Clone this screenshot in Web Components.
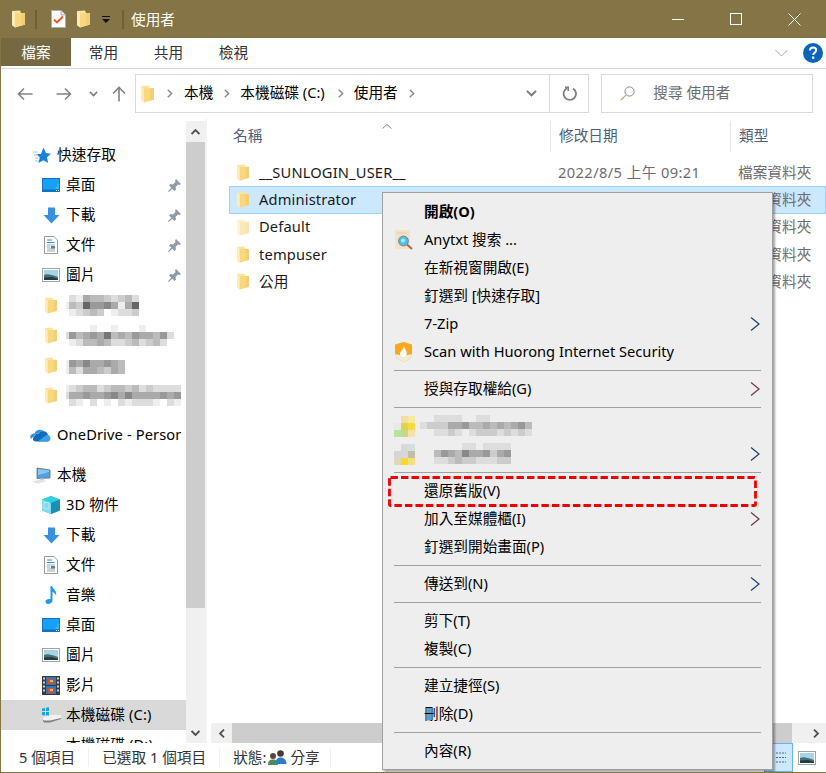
<!DOCTYPE html>
<html lang="zh-Hant"><head><meta charset="utf-8"><title>使用者</title>
<style>
html,body{margin:0;padding:0;background:#fff}
body{font-family:"Noto Sans","Noto Sans CJK TC",sans-serif;font-size:14.67px;color:#000}
</style></head><body>
<template id="t-window"><style>
:host{display:flex;flex-direction:column;position:relative;width:826px;height:773px;box-sizing:border-box;border-left:1px solid #857445;border-bottom:1px solid #857445;overflow:hidden;background:#fff}
.main{flex:1;display:flex;min-height:0}
</style>
<slot name="top"></slot><div class="main"><slot name="main"></slot></div><slot name="status"></slot><slot name="over"></slot></template>

<template id="t-title"><style>
:host{display:flex;align-items:center;height:38px;flex:none;background:#857445;color:#fff;margin-left:-1px;padding-left:12px}
.s{height:17px;background:#a39a75;border:1px solid #6e6039;margin:0 0 0 10px;box-sizing:content-box;width:0}
.t{font-size:14.67px;margin-left:7px;color:#fff;line-height:20px;margin-top:-1px}
.btns{margin-left:auto;display:flex;align-items:center;padding-right:2px}
.b{width:58.5px;height:38px;display:flex;align-items:center;justify-content:center}
</style>
<x-icon name="folder" w="13" h="18"></x-icon><span class="s"></span>
<x-icon name="check" w="15" h="18" style="margin-left:14px"></x-icon>
<x-icon name="folder" w="13" h="18" style="margin-left:11px"></x-icon>
<x-icon name="qat" w="8" h="8" style="margin-left:12px;margin-top:2px"></x-icon><span class="s" style="margin-left:12px"></span>
<span class="t">使用者</span>
<div class="btns"><div class="b"><x-icon name="min" w="12" h="12"></x-icon></div><div class="b"><x-icon name="max" w="12" h="12"></x-icon></div><div class="b"><x-icon name="close" w="13" h="13"></x-icon></div></div>
</template>

<template id="t-tabs"><style>
:host{display:flex;align-items:center;height:31px;flex:none;box-sizing:border-box;border-bottom:1px solid #dadada;background:#fff;color:#333}
.tab{height:30px;display:flex;align-items:center;justify-content:center;line-height:20px;padding-bottom:2px;box-sizing:border-box;width:65px}
.on{background:#766840;color:#fff;width:70px;height:28px;margin-top:-2px;padding-bottom:0}
.r{margin-left:auto;display:flex;align-items:center;gap:15px;padding-right:3px}
</style>
<div class="tab on">檔案</div><div class="tab">常用</div><div class="tab">共用</div><div class="tab">檢視</div>
<div class="r"><x-icon name="chev-d-thin" w="13" h="8"></x-icon><x-icon name="help" w="20" h="20"></x-icon></div>
</template>

<template id="t-nav"><style>
:host{display:flex;align-items:center;height:50px;flex:none;box-sizing:border-box;padding:5px 13px 6px 0;background:#fff;color:#000}
.ico{display:flex;align-items:center;padding-left:16px}
.addr{margin-left:9px;width:455px;height:39px;box-sizing:border-box;border:1px solid #d9d9d9;display:flex;align-items:center;padding-left:5px}
.addr span{line-height:20px;white-space:nowrap;margin-top:-3px}
.addr x-icon{flex:none}
.ch{margin:0 10px 0 11px}
.end{margin-left:auto;display:flex;align-items:center;height:100%}
.rf{width:38px;height:100%;border-left:1px solid #d9d9d9;display:flex;align-items:center;justify-content:center}
.search{margin-left:12px;width:212px;height:39px;box-sizing:border-box;border:1px solid #d9d9d9;display:flex;align-items:center;padding-left:18px;color:#6d6d6d}
.search span{margin-left:18px;line-height:20px;margin-top:-3px}
</style>
<div class="ico"><x-icon name="back" w="16" h="14"></x-icon><x-icon name="fwd" w="16" h="14" style="margin-left:23px"></x-icon><x-icon name="chev-d" w="9" h="6" style="margin-left:17px"></x-icon><x-icon name="up" w="14" h="16" style="margin-left:14px"></x-icon></div>
<div class="addr"><x-icon name="folder" w="13" h="18"></x-icon><x-icon class="ch" name="chev-r" w="6" h="9" style="margin-left:13px;margin-right:11px"></x-icon><span>本機</span><x-icon class="ch" name="chev-r" w="6" h="9"></x-icon><span>本機磁碟 (C:)</span><x-icon class="ch" name="chev-r" w="6" h="9" style="margin-left:13px"></x-icon><span>使用者</span><x-icon class="ch" name="chev-r" w="6" h="9"></x-icon>
<div class="end"><x-icon name="chev-d" w="11" h="7" style="margin-right:12px"></x-icon><div class="rf"><x-icon name="refresh" w="15" h="15"></x-icon></div></div></div>
<div class="search"><x-icon name="search" w="15" h="15"></x-icon><span>搜尋 使用者</span></div>
</template>

<template id="t-side"><style>
:host{display:block;width:185px;flex:none;overflow:hidden;padding-top:21px;box-sizing:border-box}
</style><slot></slot></template>

<template id="t-row"><style>
:host{display:flex;align-items:center;height:30px;box-sizing:border-box;white-space:nowrap;overflow:hidden;color:#000}
:host([level="0"]){padding-left:32px}
:host([level="1"]){padding-left:41px}
:host([selected]){background:#d9d9d9}
.ic{flex:none;width:18px;display:flex;justify-content:center;margin-right:6px}
.tx{line-height:20px;margin-top:-2px;flex:1;overflow:hidden;letter-spacing:.12px}
.pin{flex:none;margin-right:5px;display:flex}
</style><span class="ic"><slot name="i"></slot></span><span class="tx"><slot></slot></span><span class="pin"><slot name="p"></slot></span></template>

<template id="t-vscroll"><style>
:host{display:flex;flex-direction:column;width:19px;flex:none;background:#f0f0f0;margin-top:2px}
.a{height:21px;display:flex;align-items:center;justify-content:center;flex:none}
.th{height:466px;background:#cdcdcd;flex:none}
.f{flex:1}
</style><div class="a"><x-icon name="chev-u-b" w="9" h="6"></x-icon></div><div class="th"></div><div class="f"></div><div class="a"><x-icon name="chev-d-b" w="9" h="6"></x-icon></div></template>

<template id="t-files"><style>
:host{display:flex;flex-direction:column;flex:1;min-width:0;border-left:2px solid #f3f3f3;position:relative}
.hd{display:flex;height:31px;margin-top:2px;color:#4c607a;flex:none;position:relative}
.c{box-sizing:border-box;line-height:20px;padding-left:8px;padding-top:4px;border-right:1px solid #e5e5e5;height:31px}
.c1{width:344px;padding-left:26px}.c2{width:180px}.c3{flex:1;border:0}
.up{position:absolute;left:175px;top:3px}
.list{flex:1;padding-top:7px;min-height:0;overflow:hidden}
.sb{height:20px;flex:none;display:flex;align-items:center;background:#f0f0f0;margin-left:4px}
.sb .l{width:21px;display:flex;justify-content:center}.sb .t{width:560px;height:100%;background:#cdcdcd}.sb .r{margin-left:auto;width:21px;display:flex;justify-content:center}
</style><div class="hd"><div class="c c1">名稱</div><div class="c c2">修改日期</div><div class="c c3">類型</div><x-icon class="up" name="chev-u-thin" w="10" h="5"></x-icon></div>
<div class="list"><slot></slot></div>
<div class="sb"><div class="l"><x-icon name="chev-l-b" w="6" h="9"></x-icon></div><div class="t"></div><div class="r"><x-icon name="chev-r-b" w="6" h="9"></x-icon></div></div></template>

<template id="t-file"><style>
:host{display:flex;align-items:center;height:27.3px;margin-left:22px;box-sizing:border-box;white-space:nowrap;color:#1a1a1a;border:1px solid transparent}
:host([selected]){background:#cce8ff;border-color:#99d1ff}
x-icon{margin-left:7px;margin-right:10px}
.n{width:299px;line-height:20px;margin-top:-2px;overflow:visible;letter-spacing:.16px}
.d{width:180px;color:#6d6d6d;line-height:20px;margin-top:-2px;letter-spacing:.4px}
.k{color:#6d6d6d;line-height:20px;margin-top:-2px}
</style><x-icon id="i" name="folder" w="12" h="17"></x-icon><span class="n"><slot></slot></span><span class="d"><slot name="date"></slot></span><span class="k">檔案資料夾</span></template>

<template id="t-status"><style>
:host{display:flex;align-items:center;height:29px;flex:none;background:#fff;color:#333;position:relative;padding-left:18px;box-sizing:border-box}
span{line-height:20px;margin-top:-2px;white-space:nowrap}
i{width:1px;height:19px;background:#f0f0f0;margin:0 13px}
.v{margin-left:auto;display:flex;align-items:center;height:100%}
.sel{width:29px;height:29px;box-sizing:border-box;background:#cce8ff;border:1px solid #66b5e0;display:flex;align-items:center;justify-content:center}
.ot{margin:0 10px 0 5px;display:flex}
</style><span>5 個項目</span><i></i><span>已選取 1 個項目</span><i></i><span>狀態:</span><x-icon name="share" w="20" h="18" style="margin:0 3px 0 1px"></x-icon><span>分享</span><i style="margin-left:10px"></i>
<div class="v"><div class="sel"><x-icon name="details" w="15" h="13"></x-icon></div><div class="ot"><x-icon name="picture" w="18" h="14"></x-icon></div></div></template>

<template id="t-menu"><style>
:host{display:block;position:absolute;left:381px;top:192px;width:391px;height:578px;box-sizing:border-box;background:#eeeeee;border:1px solid #a0a0a0;padding-top:5px;box-shadow:2px 2px 2px rgba(0,0,0,.35);color:#000}
.hl{position:absolute;left:5px;top:283px}
</style><slot></slot><svg class="hl" width="369" height="31" viewBox="0 0 369 31"><rect x="1.5" y="1.5" width="366" height="28" rx="1" fill="none" stroke="#ee0000" stroke-width="2.8" stroke-dasharray="7.4 3.1"/></svg></template>

<template id="t-mi"><style>
:host{display:flex;align-items:center;height:28px;padding-left:41px;position:relative;white-space:nowrap}
:host([bold]){font-weight:700}
.tx{line-height:20px;margin-top:-2px}
.ic{position:absolute;left:11px;top:4px;display:flex}
.ar{position:absolute;left:367px;top:7px;display:flex}
</style><span class="ic"><slot name="i"></slot></span><span class="tx"><slot></slot></span><span class="ar" id="a"></span></template>

<template id="t-sep"><style>:host{display:block;height:1px;background:#a0a0a0;margin:4px 11px 4px 11px}</style></template>

<x-window>
 <x-title slot="top"></x-title><x-tabs slot="top"></x-tabs><x-nav slot="top"></x-nav>
 <x-side slot="main">
  <x-row level="0"><x-icon slot="i" name="star" w="18" h="17"></x-icon>快速存取</x-row>
  <x-row level="1"><x-icon slot="i" name="desktop" w="18" h="14"></x-icon>桌面<x-icon slot="p" name="pin" w="13" h="13"></x-icon></x-row>
  <x-row level="1"><x-icon slot="i" name="down" w="17" h="17"></x-icon>下載<x-icon slot="p" name="pin" w="13" h="13"></x-icon></x-row>
  <x-row level="1"><x-icon slot="i" name="doc" w="14" h="18"></x-icon>文件<x-icon slot="p" name="pin" w="13" h="13"></x-icon></x-row>
  <x-row level="1"><x-icon slot="i" name="picture" w="18" h="14"></x-icon>圖片<x-icon slot="p" name="pin" w="13" h="13"></x-icon></x-row>
  <x-row level="1"><x-icon slot="i" name="folder" w="12" h="17"></x-icon><x-blur data="fdeabbcdcbdf ebc6998aea6f fedcbcfeddcf" style="margin:1px 0 0 -4px"></x-blur></x-row>
  <x-row level="1"><x-icon slot="i" name="folder" w="12" h="17"></x-icon><x-blur data="ffffeffefffeffff d9ba9a7bab9aab9d fedbbabddcbdcbdf" style="margin:1px 0 0 -4px"></x-blur></x-row>
  <x-row level="1"><x-icon slot="i" name="folder" w="12" h="17"></x-icon><x-blur data="e9a8aa9ab ebdaabcab" style="margin:1px 0 0 -4px"></x-blur></x-row>
  <x-row level="1"><x-icon slot="i" name="folder" w="12" h="17"></x-icon><x-blur data="edcbbdcbbcbdcdddde daa9aa98a8aaaa9a99 fdefdfefdedddefdee" style="margin:1px 0 0 -4px"></x-blur></x-row>
  <div style="height:10px"></div>
  <x-row level="0"><x-icon slot="i" name="onedrive" w="21" h="14" style="margin-left:-3px"></x-icon>OneDrive - Personal</x-row>
  <div style="height:10px"></div>
  <x-row level="0"><x-icon slot="i" name="pc" w="20" h="17" style="margin-left:-2px"></x-icon>本機</x-row>
  <x-row level="1"><x-icon slot="i" name="cube" w="18" h="18"></x-icon>3D 物件</x-row>
  <x-row level="1"><x-icon slot="i" name="down" w="17" h="17"></x-icon>下載</x-row>
  <x-row level="1"><x-icon slot="i" name="doc" w="14" h="18"></x-icon>文件</x-row>
  <x-row level="1"><x-icon slot="i" name="music" w="13" h="18"></x-icon>音樂</x-row>
  <x-row level="1"><x-icon slot="i" name="desktop" w="18" h="14"></x-icon>桌面</x-row>
  <x-row level="1"><x-icon slot="i" name="picture" w="18" h="14"></x-icon>圖片</x-row>
  <x-row level="1"><x-icon slot="i" name="film" w="18" h="19"></x-icon>影片</x-row>
  <x-row level="1" selected><x-icon slot="i" name="drive" w="20" h="16"></x-icon>本機磁碟 (C:)</x-row>
  <x-row level="1"><x-icon slot="i" name="drive2" w="20" h="16"></x-icon>本機磁碟 (D:)</x-row>
 </x-side>
 <x-vscroll slot="main"></x-vscroll>
 <x-files slot="main">
  <x-file>__SUNLOGIN_USER__<span slot="date">2022/8/5 上午 09:21</span></x-file>
  <x-file selected>Administrator</x-file>
  <x-file faded>Default</x-file>
  <x-file>tempuser</x-file>
  <x-file>公用</x-file>
 </x-files>
 <x-status slot="status"></x-status>
 <x-menu slot="over">
  <x-mi bold>開啟(O)</x-mi>
  <x-mi><x-icon slot="i" name="anytxt" w="20" h="20"></x-icon>Anytxt 搜索 ...</x-mi>
  <x-mi>在新視窗開啟(E)</x-mi>
  <x-mi>釘選到 [快速存取]</x-mi>
  <x-mi arrow="#17406a">7-Zip</x-mi>
  <x-mi><x-icon slot="i" name="shield" w="19" h="20"></x-icon>Scan with Huorong Internet Security</x-mi>
  <x-sep></x-sep>
  <x-mi arrow="#70304a">授與存取權給(G)</x-mi>
  <x-sep></x-sep>
  <x-mi><x-blur slot="i" colors="eeeeee,f5dca0,f3eb9f;e8e8e8,d6d84e,f9d840;b5e59b,cdd588,f8dfab"></x-blur><x-blur data="eeddddeeddeeeeeee dcccaa9bbababa9be eeddcdedcccdcdcde" style="margin:-1px 0 0 -4px"></x-blur></x-mi>
  <x-mi arrow="#17406a"><x-blur slot="i" colors="eeeeee,d8d8d8,d6dde0;d5d5d5,d8d8d8,c2bfa8;ddd8b8,f8d72e,f3e07f"></x-blur><x-blur data="eeeeeeddedddd eeb9ab8aa9ca9 eeddcbccdddcc" style="margin:-1px 0 0 -4px"></x-blur></x-mi>
  <x-sep></x-sep>
  <x-mi>還原舊版(V)</x-mi>
  <x-mi arrow="#70304a">加入至媒體櫃(I)</x-mi>
  <x-mi>釘選到開始畫面(P)</x-mi>
  <x-sep></x-sep>
  <x-mi arrow="#17406a">傳送到(N)</x-mi>
  <x-sep></x-sep>
  <x-mi>剪下(T)</x-mi>
  <x-mi>複製(C)</x-mi>
  <x-sep></x-sep>
  <x-mi>建立捷徑(S)</x-mi>
  <x-mi>刪除(D)</x-mi>
  <x-sep></x-sep>
  <x-mi>內容(R)</x-mi>
 </x-menu>
</x-window>

<script>
const ICONS={
folder:['0 0 13 18','<path d="M0 1 8 0.6 9 3H13V14.5L3 17.6 0 15Z" fill="#fbe3a1"/><path d="M3 3.2H13V14.6L3 17.4Z" fill="#f8d77e"/><path d="M0 1.2 2.8 3.2V17.2L0 15Z" fill="#fdeeb9"/><path d="M9.3 3.2H13V14.6L9.3 15.6Z" fill="#f2cf76"/>'],
check:['0 0 15 18','<path d="M.5.5H10L14.5 5V17.5H.5Z" fill="#fff" stroke="#a7aeb4"/><path d="M10 .5V5H14.5" fill="#e8edf0" stroke="#a7aeb4"/><path d="M3 9.5 6 12.5 12 6.5" fill="none" stroke="#e8562a" stroke-width="1.8"/>'],
qat:['0 0 8 8','<path d="M0 .5H8" stroke="#111"/><path d="M0 3H8L4 7Z" fill="#111"/>'],
min:['0 0 12 12','<path d="M0 6.5H12" stroke="#fff"/>'],
max:['0 0 12 12','<rect x=".5" y=".5" width="11" height="11" fill="none" stroke="#fff"/>'],
close:['0 0 13 13','<path d="M.5.5 12.5 12.5M12.5.5.5 12.5" stroke="#fff" fill="none"/>'],
'chev-d-thin':['0 0 13 8','<path d="M.5 1 6.5 7 12.5 1" fill="none" stroke="#a0a0a0"/>'],
help:['0 0 20 20','<circle cx="10" cy="10" r="10" fill="#0a64b8"/><path d="M7 7.5C7 5.7 8.3 4.6 10.1 4.6 12 4.6 13.2 5.7 13.2 7.3 13.2 9.6 10.2 9.6 10.2 12" fill="none" stroke="#fff" stroke-width="2"/><rect x="9" y="13.5" width="2.3" height="2.3" fill="#fff"/>'],
back:['0 0 16 14','<path d="M15.5 7H1.5M7 1.5 1.5 7 7 12.5" fill="none" stroke="#838383" stroke-width="1.6"/>'],
fwd:['0 0 16 14','<path d="M.5 7H14.5M9 1.5 14.5 7 9 12.5" fill="none" stroke="#838383" stroke-width="1.6"/>'],
'chev-d':['0 0 9 6','<path d="M.8.8 4.5 4.6 8.2.8" fill="none" stroke="#787878" stroke-width="1.6"/>'],
up:['0 0 14 16','<path d="M7 15.5V1.5M1 7.5 7 1.5 13 7.5" fill="none" stroke="#838383" stroke-width="1.6"/>'],
'chev-r':['0 0 6 9','<path d="M.8.8 4.6 4.5.8 8.2" fill="none" stroke="#8a8a8a" stroke-width="1.5"/>'],
refresh:['0 0 15 15','<path d="M5 2.2A6.2 6.2 0 1 0 11 2.4" fill="none" stroke="#7f7f7f" stroke-width="1.8"/><path d="M4 0H8V4.5H6.5V2H4Z" fill="#7f7f7f" transform="translate(-1 .5)"/>'],
search:['0 0 15 15','<circle cx="9.5" cy="5.5" r="4.6" fill="none" stroke="#8a8a8a"/><path d="M6.2 8.8 .8 14.2" stroke="#d29a6e" stroke-width="1.2"/>'],
star:['0 0 18 17','<path d="M10.5 .5 13 6 18 6.7 14 10.3 15.2 16 10.5 13.2 5.5 16 6.8 10.3 3 7H8Z" fill="#1c83dd"/><path d="M0 5H5M1 8H5M2 11H5M2 14H6" stroke="#9ccaf0" stroke-width="1"/>'],
desktop:['0 0 18 14','<rect x=".5" y=".5" width="17" height="13" fill="#16a0f6" stroke="#1672c0"/><rect x="1" y="11.5" width="16" height="2" fill="#1272bd"/><path d="M13 11 17 4V11Z" fill="#3ab2fa"/><path d="M14 12.5h1M16 12.5h1" stroke="#e6f4ff"/>'],
down:['0 0 17 17','<path d="M5 .5H12V8H16.5L8.5 16.5 .5 8H5Z" fill="#3a90de"/>'],
doc:['0 0 14 18','<path d="M.5.5H10L13.5 4V17.5H.5Z" fill="#fff" stroke="#9a9a9a"/><path d="M3 4H8M3 6.5H10.5" stroke="#2f8fdb"/><path d="M3 9H11M3 11H6M3 13H11M3 15H11" stroke="#9aa7b0"/><rect x="7" y="10" width="4" height="2.5" fill="#5a7fa0"/>'],
picture:['0 0 18 14','<rect x=".5" y=".5" width="17" height="13" fill="#fff" stroke="#a3a3a3"/><rect x="2" y="2" width="14" height="10" fill="#a5d4ef"/><path d="M2 7C5 5.500 8 6 16 9V12H2Z" fill="#4c6f6a"/><path d="M2 9.500 10 9 16 11V12H2Z" fill="#1f3b45"/>'],
pin:['0 0 13 13','<path d="M8 0 13 5 11.500 6 10 5.500 7.500 8 8 10.500 6.500 12 4.300 9.800.8 13 0 12.300 3.300 8.800 1 6.500 2.500 5 5 5.500 7.500 3 7 1.500Z" fill="#8f9ba8"/>'],
onedrive:['0 0 21 14','<path d="M5 13.500H17.500A3.200 3.200 0 0 0 18 7.300 5 5 0 0 0 8.800 5.500 4 4 0 0 0 4 9 2.500 2.500 0 0 0 5 13.500Z" fill="#0f6cbd"/><path d="M4.500 5.500A5.800 5.800 0 0 1 14.500 4 5 5 0 0 0 8.800 5.500 4.300 4.300 0 0 0 4 9 4 4 0 0 0 1 11 3.500 3.500 0 0 1 4.500 5.500Z" fill="#2f91e3"/><path d="M8 13.500H18A3 3 0 0 0 20 9 3 3 0 0 0 15 8Z" fill="#3aa0ea"/>'],
pc:['0 0 20 17','<path d="M6 1 19 3V11L6 11.500Z" fill="#4ea3e6" stroke="#545e6a" stroke-width=".7"/><path d="M7 2 18 3.500V5L7 8Z" fill="#8cc6f2"/><path d="M1 14.500 10 12.500 16 14 7 16.500Z" fill="#e3e3e3"/><path d="M9 11.500H13V13H9Z" fill="#cfcfcf"/>'],
cube:['0 0 18 18','<path d="M9 0 18 3.500V14.500L9 18 0 14.500V3.500Z" fill="#3cb4d4"/><path d="M0 3.500 9 7V18L0 14.500Z" fill="#86dbed"/><path d="M9 0 18 3.500 9 7 0 3.500Z" fill="#2fd0e2"/><path d="M9 7 18 3.500V14.500L9 18Z" fill="#1d8fb6"/><path d="M2 6.500h5v6H2Z" fill="none" stroke="#bdeef5" stroke-width=".8"/>'],
music:['0 0 13 18','<path d="M5.500 0H7C7.500 3 12.500 4.500 11 10 10.800 7.500 9 6.500 7.500 6V14.500C7.500 16.800 5 18 3 18 1 18 .5 16.500 .5 15.500.5 13.800 2.500 12.500 5.500 13Z" fill="#2199ea"/>'],
film:['0 0 18 19','<rect width="18" height="19" fill="#3a3a3a"/><path d="M1 1.500h2v2H1Zm0 4h2v2H1Zm0 4h2v2H1Zm0 4h2v2H1ZM15 1.500h2v2h-2Zm0 4h2v2h-2Zm0 4h2v2h-2Zm0 4h2v2h-2Z" fill="#cfcfcf"/><rect x="4" y="1" width="10" height="8" fill="#3a74b8"/><rect x="4" y="10" width="10" height="8" fill="#3a74b8"/><path d="M6 3h6v5H6ZM6 12h6v5H6Z" fill="#c9543a"/><path d="M8 4h3v2H8ZM8 13h3v2H8Z" fill="#e8b84a"/>'],
drive:['0 0 20 16','<path d="M2 10.500 9 8H20V11.500L9 15H3L2 13.500Z" fill="#f1f1f1"/><path d="M2 12.500 3 13.500H9L20 11V12L9 15.500H3L2 14Z" fill="#7c8286"/><path d="M1 1.500 4 1V4H1ZM5 .8 8 .3V4H5ZM1 5H4V8.200H1ZM5 5H8V8.500L5 8.200Z" fill="#14a4ea"/>'],
drive2:['0 0 20 16','<path d="M2 10.500 9 8H20V11.500L9 15H3L2 13.500Z" fill="#e2e2e2"/>'],
'chev-u-b':['0 0 9 6','<path d="M.6 5 4.500 1 8.400 5" fill="none" stroke="#505050" stroke-width="1.800"/>'],
'chev-d-b':['0 0 9 6','<path d="M.6 1 4.500 5 8.400 1" fill="none" stroke="#505050" stroke-width="1.800"/>'],
'chev-u-thin':['0 0 10 5','<path d="M.5 4.500 5 .5 9.500 4.500" fill="none" stroke="#8a8a8a"/>'],
'chev-l-b':['0 0 6 9','<path d="M5 .6 1 4.500 5 8.400" fill="none" stroke="#505050" stroke-width="1.800"/>'],
'chev-r-b':['0 0 6 9','<path d="M1 .6 5 4.500 1 8.400" fill="none" stroke="#505050" stroke-width="1.800"/>'],
share:['0 0 20 18','<circle cx="6" cy="7" r="3" fill="#5a4a3a"/><path d="M1 16C1 11.500 3 10.500 6 10.500S11 11.500 11 16Z" fill="#4f8a5a"/><circle cx="13.500" cy="4.500" r="3.300" fill="#4a3a30"/><path d="M8.500 15C8.500 10 11 8.500 13.500 8.500S19.500 10 19.500 15Z" fill="#2b7fc4"/>'],
details:['0 0 15 13','<path d="M0 2H3M5 2H15M0 6.500H3M5 6.500H15M0 11H3M5 11H15" stroke="#5a6a75" stroke-width="1" stroke-dasharray="2 1"/>'],
anytxt:['0 0 20 20','<rect x="1" y="0" width="15" height="19" rx="1" fill="#f3e2c8"/><path d="M3 3h10" stroke="#e2cfb0"/><circle cx="9.500" cy="11" r="4.800" fill="#49c3e8" stroke="#7a8fa0" stroke-width="1.300"/><circle cx="9" cy="10.500" r="2" fill="#a7ecfa"/><path d="M13 14.500 18 19" stroke="#b9653a" stroke-width="2"/>'],
shield:['0 0 19 20','<path d="M9.500 0 18 2.500V11C18 15.500 14 18.500 9.500 20 5 18.500 1 15.500 1 11V2.500Z" fill="#f8a81f"/><path d="M9.500 14 18 12C17.500 15.500 14 18.500 9.500 20 5 18.500 1.500 15.500 1 12Z" fill="#f3ead8"/><path d="M10 4C10.500 8 14 9 12.500 13 11.800 15.500 8 16 6.500 13.500 5 11 7.500 9.500 8 7.500 9 8.500 9.500 6 10 4Z" fill="#fff"/>']
};
function tpl(id){return document.getElementById(id).content.cloneNode(true)}
class Base extends HTMLElement{constructor(){super();this.attachShadow({mode:'open'}).appendChild(tpl(this.constructor.tid))}}
function reg(tag,id){customElements.define(tag,class extends Base{static tid=id})}
class XIcon extends HTMLElement{connectedCallback(){if(this.shadowRoot)return;const s=this.attachShadow({mode:'open'});const w=this.getAttribute('w'),h=this.getAttribute('h');const d=ICONS[this.getAttribute('name')];s.innerHTML=`<style>:host{display:inline-flex;flex:none;width:${w}px;height:${h}px}svg{display:block}</style><svg width="${w}" height="${h}" viewBox="${d[0]}" preserveAspectRatio="none">${d[1]}</svg>`}}
customElements.define('x-icon',XIcon);
class XBlur extends HTMLElement{connectedCallback(){if(this.shadowRoot)return;const s=this.attachShadow({mode:'open'});let rows,cell=7,out='';const c=this.getAttribute('colors');
 if(c){rows=c.split(';').map(r=>r.split(',').map(x=>'#'+x))}else{rows=this.getAttribute('data').split(' ').map(r=>[...r].map(x=>'#'+x+x+x+x+x+x))}
 const W=Math.max(...rows.map(r=>r.length))*cell,H=rows.length*cell;
 rows.forEach((r,y)=>r.forEach((f,x)=>{out+=`<rect x="${x*cell}" y="${y*cell}" width="${cell}" height="${cell}" fill="${f}"/>`}));
 s.innerHTML=`<style>:host{display:inline-flex;flex:none;vertical-align:middle}svg{display:block}</style><svg width="${W}" height="${H}" shape-rendering="crispEdges">${out}</svg>`}}
customElements.define('x-blur',XBlur);
reg('x-window','t-window');reg('x-title','t-title');reg('x-tabs','t-tabs');reg('x-nav','t-nav');reg('x-side','t-side');reg('x-row','t-row');reg('x-vscroll','t-vscroll');reg('x-files','t-files');reg('x-status','t-status');reg('x-menu','t-menu');reg('x-sep','t-sep');
customElements.define('x-file',class extends Base{static tid='t-file';connectedCallback(){if(this.hasAttribute('faded'))this.shadowRoot.getElementById('i').style.opacity='.55'}});
customElements.define('x-mi',class extends Base{static tid='t-mi';connectedCallback(){const c=this.getAttribute('arrow');if(c)this.shadowRoot.getElementById('a').innerHTML=`<svg width="10" height="14" viewBox="0 0 10 14"><path d="M1 .5 9 7 1 13.500" fill="none" stroke="${c}" stroke-width="1.200"/></svg>`}});
</script>
</body></html>
